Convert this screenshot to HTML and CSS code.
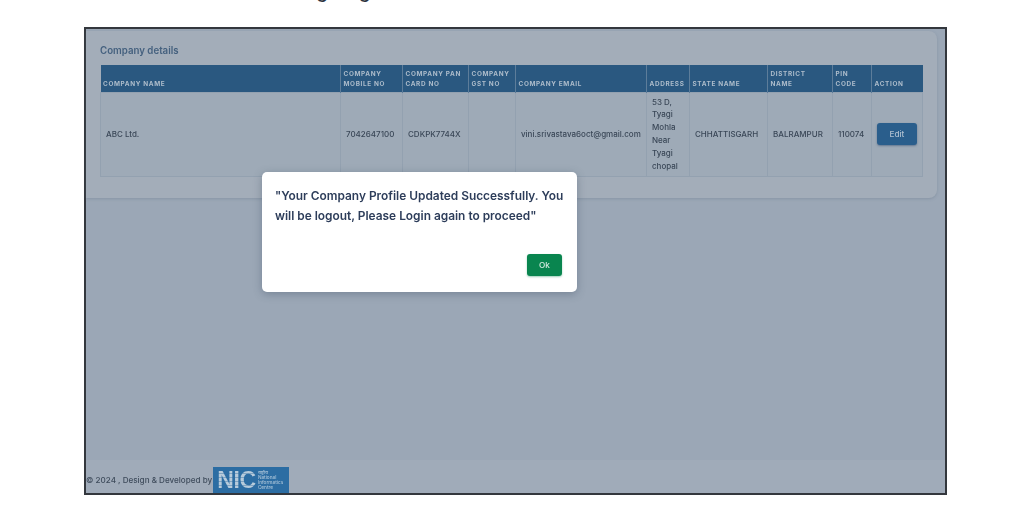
FILE: index.html
```html
<!DOCTYPE html>
<html lang="en">
<head>
<meta charset="utf-8">
<title>Company details</title>
<link rel="stylesheet" href="styles.css">
</head>
<body>
<div class="top-strip"><span class="top-text">Login again</span></div>
<main class="frame">
  <section class="card">
    <h2 class="card-title">Company details</h2>
    <table class="grid">
      <colgroup>
        <col class="c-name"><col class="c-mobile"><col class="c-pan"><col class="c-gst"><col class="c-email">
        <col class="c-addr"><col class="c-state"><col class="c-dist"><col class="c-pin"><col class="c-act">
      </colgroup>
      <thead>
        <tr>
          <th>Company Name</th><th>Company Mobile No</th><th>Company Pan Card No</th><th>Company GST No</th><th>Company Email</th>
          <th>Address</th><th>State Name</th><th>District Name</th><th>Pin Code</th><th>Action</th>
        </tr>
      </thead>
      <tbody>
        <tr>
          <td>ABC Ltd.</td><td>7042647100</td><td>CDKPK7744X</td><td></td><td>vini.srivastava6oct@gmail.com</td>
          <td>53 D, Tyagi Mohla Near Tyagi chopal</td><td>CHHATTISGARH</td><td>BALRAMPUR</td><td>110074</td>
          <td><button class="btn-edit">Edit</button></td>
        </tr>
      </tbody>
    </table>
  </section>
  <footer class="foot">
    <span>© 2024 , Design &amp; Developed by</span>
    <div class="nic">
      <span class="nic-mark">NIC</span>
      <span class="nic-text">राष्ट्रीय<br>National<br>Informatics<br>Centre</span>
    </div>
  </footer>
  <div class="modal">
    <p class="modal-msg">"Your Company Profile Updated Successfully. You will be logout, Please Login again to proceed"</p>
    <button class="btn-ok">Ok</button>
  </div>
</main>
</body>
</html>
```

FILE: styles.css
```css
* { box-sizing: border-box; }
html, body { margin: 0; background: #fff; }
body { font-family: "Inter", "Liberation Sans", "Noto Sans", sans-serif; color: #3c4a5b; height: 513px; overflow: hidden; }

.top-strip { height: 27px; overflow: hidden; padding-left: 295px; }
.top-text { display: block; margin-top: -20px; font-size: 18.4px; line-height: 22px; color: #2c3440; font-weight: 500; }

.frame {
  position: relative;
  display: flex;
  flex-direction: column;
  width: 863px;
  height: 468px;
  margin-left: 84px;
  border: 2px solid #33373d;
  background: #9ba7b6;
  filter: blur(.35px);
}

.card {
  margin: 2px 8px 0 0;
  height: 167px;
  padding: 13px 15px 0 14px;
  background: #a3adb9;
  border-radius: 0 8px 8px 0;
  box-shadow: 0 1px 3px rgba(90, 105, 125, .3);
}
.card-title { margin: 0 0 8px; font-size: 9.7px; line-height: 13px; font-weight: 600; color: #45617f; }

.grid { width: 822px; table-layout: fixed; border-collapse: collapse; }
.c-name { width: 240px; } .c-mobile { width: 62px; } .c-pan { width: 66px; } .c-gst { width: 47px; } .c-email { width: 131px; }
.c-addr { width: 43px; } .c-state { width: 78px; } .c-dist { width: 65px; } .c-pin { width: 39px; } .c-act { width: 51px; }

.grid th {
  height: 27px;
  padding: 2px 4px 2px 2.5px;
  background: #2a5880;
  border-right: 1px solid #5d7d9a;
  color: #aebdcb;
  font-size: 6.4px;
  line-height: 10.3px;
  font-weight: 700;
  letter-spacing: .65px;
  text-transform: uppercase;
  text-align: left;
  vertical-align: bottom;
}
.grid th:last-child { border-right: 0; }
.grid td {
  height: 84px;
  padding: 2px 5px;
  border: 1px solid #93a1b0;
  background: #9eaab7;
  font-size: 8px;
  line-height: 12.8px;
  font-weight: 500;
  color: #3a4757;
  vertical-align: middle;
}

.btn-edit {
  width: 40px;
  height: 22px;
  padding: 0;
  border: 0;
  border-radius: 3px;
  background: #2a5e8c;
  box-shadow: 0 1px 2px rgba(40, 70, 110, .5);
  color: #aebfd0;
  font: 500 8.2px "Inter", "Liberation Sans", sans-serif;
}

.foot {
  display: flex;
  align-items: flex-end;
  gap: 1px;
  margin-top: auto;
  height: 33px;
  background: #a0abb9;
  font-size: 8.1px;
  font-weight: 500;
  color: #3f4c5c;
}
.foot > span { padding: 0 0 7px 0; line-height: 11px; }

.nic {
  display: flex;
  align-items: center;
  gap: 2px;
  width: 76px;
  height: 26px;
  padding-left: 4px;
  background: #2c6da3;
}
.nic-mark {
  font: 700 23px/20px "Liberation Sans", sans-serif;
  letter-spacing: -.3px;
  color: transparent;
  background: repeating-linear-gradient(#b7cbdb 0 3px, #7fa3c1 3px 4px);
  -webkit-background-clip: text;
  background-clip: text;
}
.nic-text { font-size: 4.7px; line-height: 4.8px; color: #a9c3d8; }

.modal {
  position: absolute;
  left: 176px;
  top: 143px;
  display: flex;
  flex-direction: column;
  width: 315px;
  height: 120px;
  padding: 14px 13px;
  background: #fff;
  border-radius: 5px;
  box-shadow: 0 2px 8px rgba(50, 65, 90, .35);
}
.modal-msg { margin: 0; font-size: 11.9px; line-height: 20px; font-weight: 600; color: #2d3d5a; }
.btn-ok {
  margin: auto 2px 2px auto;
  width: 35px;
  height: 22px;
  padding: 0;
  border: 0;
  border-radius: 3px;
  background: #09854f;
  box-shadow: 0 1px 2px rgba(9, 133, 79, .4);
  color: #d5eadf;
  font: 500 8.2px "Inter", "Liberation Sans", sans-serif;
}
```
